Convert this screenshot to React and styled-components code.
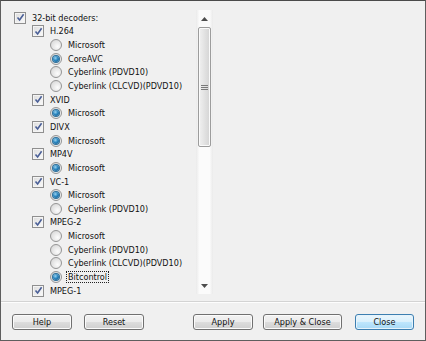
import React from "react";
import styled, { createGlobalStyle, css } from "styled-components";

const GlobalStyle = createGlobalStyle`
  html, body {
    margin: 0;
    padding: 0;
    background: #f0f0f0;
  }
  * {
    box-sizing: border-box;
  }
`;

const decoders = [
  { level: 0, type: "check", label: "32-bit decoders:" },
  { level: 1, type: "check", label: "H.264" },
  { level: 2, type: "radio", label: "Microsoft" },
  { level: 2, type: "radio", label: "CoreAVC", selected: true },
  { level: 2, type: "radio", label: "Cyberlink (PDVD10)" },
  { level: 2, type: "radio", label: "Cyberlink (CLCVD)(PDVD10)" },
  { level: 1, type: "check", label: "XVID" },
  { level: 2, type: "radio", label: "Microsoft", selected: true },
  { level: 1, type: "check", label: "DIVX" },
  { level: 2, type: "radio", label: "Microsoft", selected: true },
  { level: 1, type: "check", label: "MP4V" },
  { level: 2, type: "radio", label: "Microsoft", selected: true },
  { level: 1, type: "check", label: "VC-1" },
  { level: 2, type: "radio", label: "Microsoft", selected: true },
  { level: 2, type: "radio", label: "Cyberlink (PDVD10)" },
  { level: 1, type: "check", label: "MPEG-2" },
  { level: 2, type: "radio", label: "Microsoft" },
  { level: 2, type: "radio", label: "Cyberlink (PDVD10)" },
  { level: 2, type: "radio", label: "Cyberlink (CLCVD)(PDVD10)" },
  { level: 2, type: "radio", label: "Bitcontrol", selected: true, focused: true },
  { level: 1, type: "check", label: "MPEG-1" },
];

const uiFont = `"DejaVu Sans Condensed", "DejaVu Sans", sans-serif`;

const Window = styled.div`
  width: 426px;
  height: 341px;
  background: #f0f0f0;
  border: 1px solid #5e5e5e;
  border-top-color: #4a4a4a;
  display: flex;
  flex-direction: column;
  font-family: ${uiFont};
  font-stretch: condensed;
  font-size: 9px;
  color: #111;
`;

const Body = styled.div`
  height: 300px;
  display: flex;
  padding: 9px 0 0 13px;
`;

const Tree = styled.div`
  width: 181px;
  padding-top: 1px;
`;

const Row = styled.div`
  height: 13.65px;
  display: flex;
  align-items: center;
  padding-left: ${(p) => p.$level * 18}px;
  white-space: nowrap;
`;

const CheckBox = styled.span`
  width: 12px;
  height: 12px;
  flex: none;
  border: 1px solid #8f8f8f;
  background: linear-gradient(135deg, #dcdcdc, #fbfbfb);
  box-shadow: inset 0 0 0 1px #f4f4f4;
  display: flex;
  align-items: center;
  justify-content: center;
`;

const Radio = styled.span`
  width: 12px;
  height: 12px;
  flex: none;
  border-radius: 50%;
  border: 1px solid #959595;
  background: radial-gradient(circle at 65% 65%, #fcfcfc 0%, #e2e2e2 60%, #cfcfcf 100%);
  display: flex;
  align-items: center;
  justify-content: center;
  ${(p) =>
    p.$selected &&
    css`
      &::after {
        content: "";
        width: 6px;
        height: 6px;
        border-radius: 50%;
        background: radial-gradient(circle at 40% 35%, #9ad3f0 0%, #2a86c0 45%, #0d4d7d 100%);
        box-shadow: 0 0 0 1px #2d6f9a;
      }
    `}
`;

const Label = styled.span`
  margin-left: 4px;
  padding: 0 1px;
  line-height: 10px;
  border: 1px dotted ${(p) => (p.$focused ? "#222" : "transparent")};
`;

const ScrollBar = styled.div`
  width: 17px;
  height: 284px;
  margin-left: 1px;
  display: flex;
  flex-direction: column;
  align-items: center;
  background: linear-gradient(90deg, #eaeaea, #fbfbfb 20%, #fbfbfb 80%, #eaeaea);
`;

const Arrow = styled.div`
  height: 17px;
  width: 17px;
  display: flex;
  align-items: center;
  justify-content: center;
  flex: none;
`;

const Thumb = styled.div`
  width: 13px;
  height: 120px;
  border: 1px solid #9c9c9c;
  border-radius: 2px;
  background: linear-gradient(90deg, #f1f1f1, #e2e2e2 50%, #d4d4d4);
  box-shadow: inset 0 0 0 1px #fafafa;
  display: flex;
  align-items: center;
  justify-content: center;
`;

const Track = styled.div`
  flex: 1;
`;

const Divider = styled.div`
  border-top: 1px solid #d3d3d3;
  border-bottom: 1px solid #fdfdfd;
`;

const ButtonBar = styled.div`
  display: flex;
  padding: 11px 0 0 11px;
`;

const Button = styled.button`
  width: ${(p) => p.$width || 60}px;
  height: 16px;
  margin-left: ${(p) => p.$gap || 0}px;
  padding: 0;
  font-family: ${uiFont};
  font-stretch: condensed;
  font-size: 9px;
  color: #111;
  border-radius: 3px;
  border: 1px solid ${(p) => (p.$default ? "#3c7fb1" : "#707070")};
  background: ${(p) =>
    p.$default
      ? "linear-gradient(#eaf6fd, #d9f0fc 50%, #bee6fd 51%, #a7d9f5)"
      : "linear-gradient(#f2f2f2, #ebebeb 50%, #dddddd 51%, #cfcfcf)"};
  box-shadow: inset 0 0 0 1px ${(p) => (p.$default ? "#e6f3fb" : "#fbfbfb")};
`;

function CheckMark() {
  return (
    <svg width="9" height="9" viewBox="0 0 9 9">
      <path d="M1.5 4.5 L3.6 7 L7.6 1.2" fill="none" stroke="#4a5f97" strokeWidth="1.6" />
    </svg>
  );
}

function ArrowIcon({ down }) {
  return (
    <svg width="7" height="4" viewBox="0 0 7 4">
      <path d={down ? "M0 0 H7 L3.5 4 Z" : "M0 4 H7 L3.5 0 Z"} fill="#4d4d4d" />
    </svg>
  );
}

function Grip() {
  return (
    <svg width="7" height="7" viewBox="0 0 7 7">
      <path d="M0 1.5 H7 M0 3.5 H7 M0 5.5 H7" stroke="#7a7a7a" strokeWidth="1" />
    </svg>
  );
}

export default function App() {
  return (
    <>
      <GlobalStyle />
      <Window>
        <Body>
          <Tree>
            {decoders.map((d, i) => (
              <Row key={i} $level={d.level}>
                {d.type === "check" ? (
                  <CheckBox>
                    <CheckMark />
                  </CheckBox>
                ) : (
                  <Radio $selected={d.selected} />
                )}
                <Label $focused={d.focused}>{d.label}</Label>
              </Row>
            ))}
          </Tree>
          <ScrollBar>
            <Arrow>
              <ArrowIcon />
            </Arrow>
            <Thumb>
              <Grip />
            </Thumb>
            <Track />
            <Arrow>
              <ArrowIcon down />
            </Arrow>
          </ScrollBar>
        </Body>
        <Divider />
        <ButtonBar>
          <Button>Help</Button>
          <Button $gap={12}>Reset</Button>
          <Button $gap={49}>Apply</Button>
          <Button $gap={10} $width={79}>Apply &amp; Close</Button>
          <Button $gap={13} $width={59} $default>Close</Button>
        </ButtonBar>
      </Window>
    </>
  );
}
